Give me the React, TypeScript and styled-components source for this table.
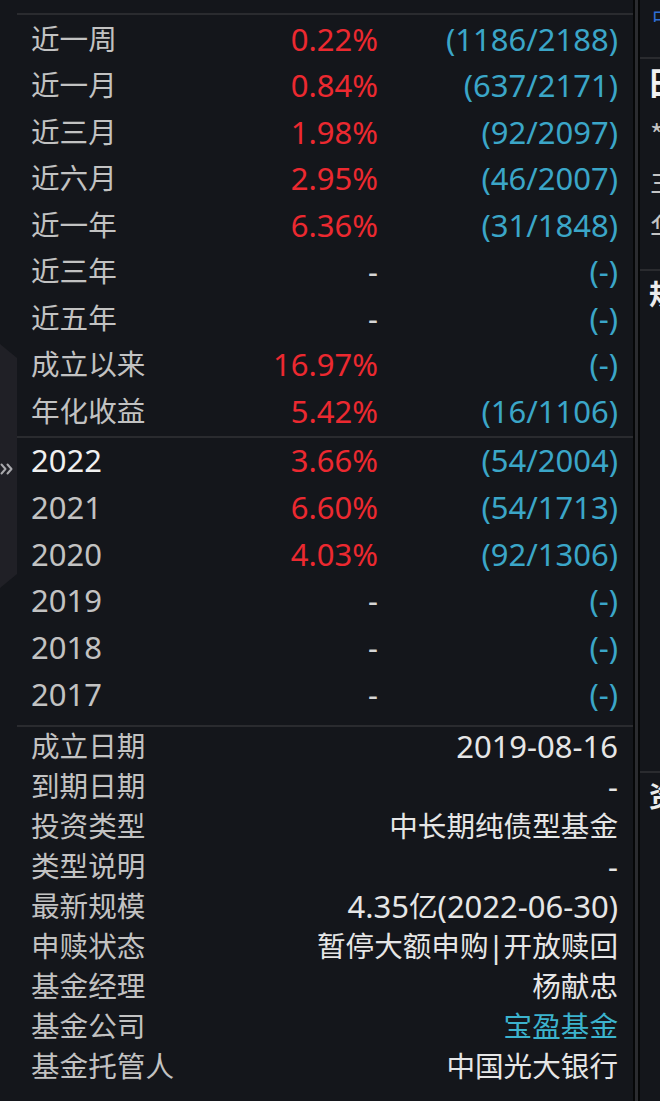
import React from "react";
import styled, { createGlobalStyle } from "styled-components";

const GlobalStyle = createGlobalStyle`
  html, body {
    margin: 0;
    padding: 0;
    background: #14161b;
    overflow: hidden;
  }
  body {
    font-family: "Noto Sans", "Noto Sans CJK SC", sans-serif;
  }
`;

const Page = styled.div`
  display: flex;
  width: 660px;
  height: 1101px;
  overflow: hidden;
  background: #14161b;
  color: #c2c2c2;
`;

const Rail = styled.div`
  width: 17px;
  flex-shrink: 0;
  display: flex;
  flex-direction: column;
`;

const Handle = styled.div`
  margin-top: 344px;
  height: 244px;
  width: 17px;
  background: #202026;
  clip-path: polygon(0 0, 100% 14px, 100% calc(100% - 14px), 0 100%);
  display: flex;
  align-items: center;
  padding-top: 6px;
  box-sizing: border-box;
`;

const Chevrons = styled.svg`
  width: 15px;
  height: 14px;
  color: #a9a9ad;
`;

const Main = styled.div`
  width: 616px;
  flex-shrink: 0;
  display: flex;
  flex-direction: column;
  padding-top: 13px;
`;

const Rule = styled.div`
  height: 2px;
  flex-shrink: 0;
  background: #2a2b2f;
`;

const Section = styled.div<{ $pt?: number; $pb?: number }>`
  display: flex;
  flex-direction: column;
  padding: ${(p) => p.$pt ?? 0}px 0 ${(p) => p.$pb ?? 0}px;
`;

const PerfRow = styled.div<{ $h: number }>`
  display: grid;
  grid-template-columns: 200px 147px 1fr;
  align-items: center;
  height: ${(p) => p.$h}px;
  padding: 0 15px 0 14px;
  font-size: 31px;
  line-height: 1;
  white-space: nowrap;
`;

const Label = styled.span<{ $bright?: boolean }>`
  color: ${(p) => (p.$bright ? "#f0f0f0" : "#c2c2c2")};
`;

const Value = styled.span<{ $up: boolean }>`
  text-align: right;
  color: ${(p) => (p.$up ? "#ec2930" : "#d6d6d6")};
`;

const Rank = styled.span`
  text-align: right;
  color: #3ba6c8;
`;

const InfoRow = styled.div`
  display: flex;
  justify-content: space-between;
  align-items: center;
  height: 40px;
  padding: 0 15px 0 14px;
  font-size: 31px;
  line-height: 1;
  white-space: nowrap;
`;

const InfoValue = styled.span<{ $link?: boolean }>`
  color: ${(p) => (p.$link ? "#3cb3cd" : "#e6e6e6")};
`;

const Han = styled.span`
  font-family: "Noto Sans CJK SC", sans-serif;
  font-size: 28.6px;
  position: relative;
  top: -1px;
`;

const Bar = styled.span`
  margin: 0 -1px;
`;

const Divider = styled.div`
  width: 3px;
  flex-shrink: 0;
  background: #2b2c30;
  border-left: 2px solid #060708;
  border-right: 2px solid #060708;
`;

const Side = styled.div`
  width: 300px;
  flex-shrink: 0;
  display: flex;
  flex-direction: column;
`;

const SideHead = styled.div`
  height: 59px;
  box-sizing: border-box;
  border-bottom: 2px solid #2a2b2f;
  padding: 6px 0 0 12px;
  color: #2f6fd6;
  font-family: "Noto Sans CJK SC", sans-serif;
  font-size: 21px;
  line-height: 1;
`;

const SideBig = styled.div`
  height: 44px;
  display: flex;
  align-items: center;
  padding-left: 7px;
  color: #f2f2f2;
  font-family: "Noto Sans CJK SC", sans-serif;
  font-weight: 700;
  font-size: 32px;
  line-height: 1;
`;

const SideGroup = styled.div`
  display: flex;
  flex-direction: column;
  padding: 8px 0 18px;
`;

const SideRow = styled.div`
  height: 46.5px;
  display: flex;
  align-items: center;
  padding-left: 10px;
  color: #c4c4c4;
  font-family: "Noto Sans CJK SC", sans-serif;
  font-size: 28.6px;
  line-height: 1;
`;

const SideTitle = styled.div`
  height: 46px;
  display: flex;
  align-items: center;
  padding-left: 9px;
  color: #ececec;
  font-family: "Noto Sans CJK SC", sans-serif;
  font-weight: 700;
  font-size: 28.6px;
  line-height: 1;
`;

const SideFill = styled.div`
  height: 454px;
`;

const mixed = (text: string) =>
  text.split(/([\u3400-\u9fff]+|\|)/).map((part, i) => {
    if (part === "|") return <Bar key={i}>|</Bar>;
    return /[\u3400-\u9fff]/.test(part) ? (
      <Han key={i}>{part}</Han>
    ) : (
      <React.Fragment key={i}>{part}</React.Fragment>
    );
  });

const periods = [
  { label: "近一周", value: "0.22%", rank: "(1186/2188)" },
  { label: "近一月", value: "0.84%", rank: "(637/2171)" },
  { label: "近三月", value: "1.98%", rank: "(92/2097)" },
  { label: "近六月", value: "2.95%", rank: "(46/2007)" },
  { label: "近一年", value: "6.36%", rank: "(31/1848)" },
  { label: "近三年", value: "-", rank: "(-)" },
  { label: "近五年", value: "-", rank: "(-)" },
  { label: "成立以来", value: "16.97%", rank: "(-)" },
  { label: "年化收益", value: "5.42%", rank: "(16/1106)" },
];

const years = [
  { label: "2022", value: "3.66%", rank: "(54/2004)", bright: true },
  { label: "2021", value: "6.60%", rank: "(54/1713)" },
  { label: "2020", value: "4.03%", rank: "(92/1306)" },
  { label: "2019", value: "-", rank: "(-)" },
  { label: "2018", value: "-", rank: "(-)" },
  { label: "2017", value: "-", rank: "(-)" },
];

const info = [
  { label: "成立日期", value: "2019-08-16" },
  { label: "到期日期", value: "-" },
  { label: "投资类型", value: "中长期纯债型基金" },
  { label: "类型说明", value: "-" },
  { label: "最新规模", value: "4.35亿(2022-06-30)" },
  { label: "申赎状态", value: "暂停大额申购|开放赎回" },
  { label: "基金经理", value: "杨献忠" },
  { label: "基金公司", value: "宝盈基金", link: true },
  { label: "基金托管人", value: "中国光大银行" },
];

export default function App() {
  return (
    <>
      <GlobalStyle />
      <Page>
        <Rail>
          <Handle>
            <Chevrons viewBox="0 0 15 14" fill="none" stroke="currentColor" strokeWidth="2" strokeLinecap="round" strokeLinejoin="round">
              <polyline points="1.5,2.5 5.5,7 1.5,11.5" />
              <polyline points="7.5,2.5 11.5,7 7.5,11.5" />
            </Chevrons>
          </Handle>
        </Rail>
        <Main>
          <Rule />
          <Section $pt={1} $pb={1}>
            {periods.map((r) => (
              <PerfRow key={r.label} $h={46.5}>
                <Label>{mixed(r.label)}</Label>
                <Value $up={r.value !== "-"}>{r.value}</Value>
                <Rank>{r.rank}</Rank>
              </PerfRow>
            ))}
          </Section>
          <Rule />
          <Section $pb={7}>
            {years.map((r) => (
              <PerfRow key={r.label} $h={46.7}>
                <Label $bright={r.bright}>{r.label}</Label>
                <Value $up={r.value !== "-"}>{r.value}</Value>
                <Rank>{r.rank}</Rank>
              </PerfRow>
            ))}
          </Section>
          <Rule />
          <Section>
            {info.map((r) => (
              <InfoRow key={r.label}>
                <Label>{mixed(r.label)}</Label>
                <InfoValue $link={r.link}>{mixed(r.value)}</InfoValue>
              </InfoRow>
            ))}
          </Section>
        </Main>
        <Divider />
        <Side>
          <SideHead>中</SideHead>
          <SideBig>日</SideBig>
          <SideGroup>
            <SideRow>*</SideRow>
            <SideRow>主</SideRow>
            <SideRow>华</SideRow>
          </SideGroup>
          <Rule />
          <SideTitle>规</SideTitle>
          <SideFill />
          <Rule />
          <SideTitle>资</SideTitle>
        </Side>
      </Page>
    </>
  );
}
